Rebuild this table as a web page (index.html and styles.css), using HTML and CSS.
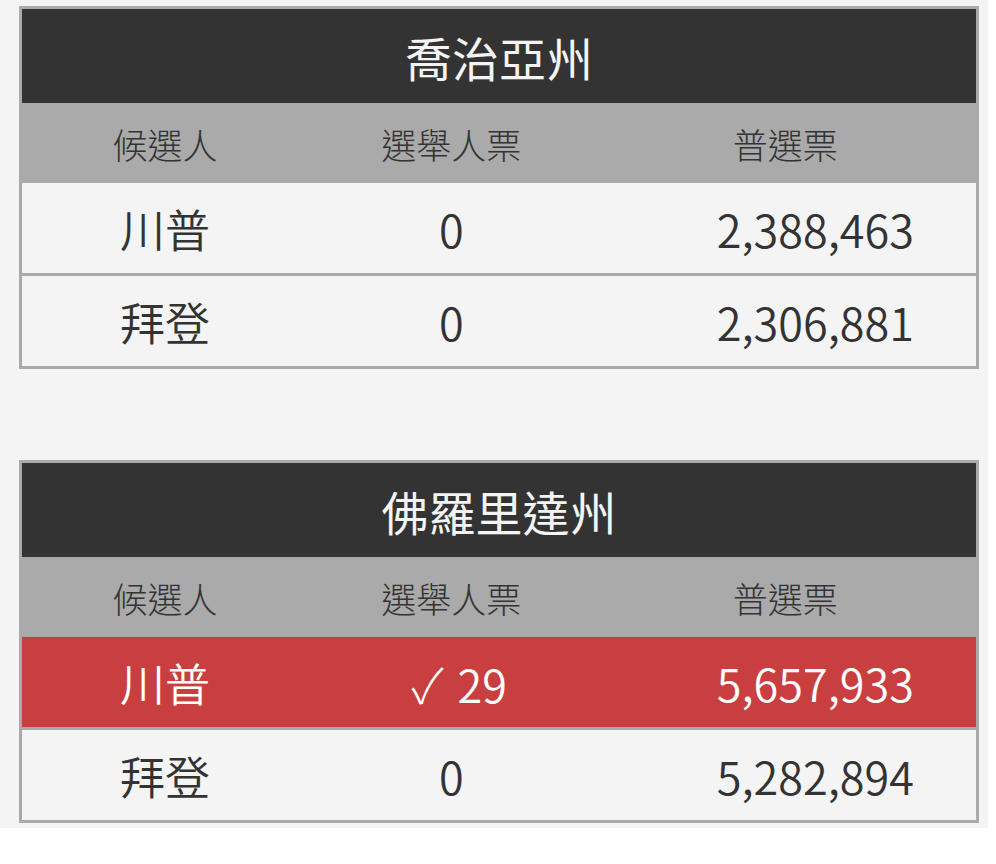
FILE: index.html
```html
<!DOCTYPE html>
<html lang="zh-Hant">
<head>
    <meta charset="UTF-8">
    <meta name="viewport" content="width=device-width, initial-scale=1.0">
    <title>州選舉結果</title>
    <link rel="stylesheet" href="styles.css">
</head>
<body>
    <div class="page">
        <div class="state">
            <div class="state-title">喬治亞州</div>
            <div class="cols">
                <div>候選人</div>
                <div>選舉人票</div>
                <div>普選票</div>
            </div>
            <div class="row">
                <div>川普</div>
                <div>0</div>
                <div class="num">2,388,463</div>
            </div>
            <div class="row">
                <div>拜登</div>
                <div>0</div>
                <div class="num">2,306,881</div>
            </div>
        </div>

        <div class="state">
            <div class="state-title">佛羅里達州</div>
            <div class="cols">
                <div>候選人</div>
                <div>選舉人票</div>
                <div>普選票</div>
            </div>
            <div class="row winner">
                <div>川普</div>
                <div class="won"><span class="check">✓</span> 29</div>
                <div class="num">5,657,933</div>
            </div>
            <div class="row">
                <div>拜登</div>
                <div>0</div>
                <div class="num">5,282,894</div>
            </div>
        </div>
    </div>
</body>
</html>
```

FILE: styles.css
```css
html {
    background-color: #fff;
}
body {
    margin: 0;
    font-family: "Noto Sans CJK TC", "Noto Sans", sans-serif;
    color: #333;
}
.page {
    width: 988px;
    height: 828px;
    box-sizing: border-box;
    padding: 6px 0 0 19px;
    background-color: #f4f4f4;
}
.state {
    width: 960px;
    box-sizing: border-box;
    border: 3px solid #aaa;
    margin-bottom: 91px;
}
.state-title {
    height: 94px;
    display: flex;
    align-items: center;
    justify-content: center;
    background-color: #333;
    color: #f4f4f4;
    font-size: 47px;
    line-height: 1;
}
.cols, .row {
    display: grid;
    grid-template-columns: 30% 30% 40%;
    align-items: center;
    text-align: center;
    line-height: 1;
}
.cols {
    height: 80px;
    background-color: #aaa;
    font-size: 35px;
    font-weight: 300;
}
.row {
    height: 90px;
    font-size: 45px;
    font-weight: 350;
}
.row + .row {
    border-top: 3px solid #aaa;
}
.row .num {
    text-align: right;
    padding-right: 62px;
}
.row.winner {
    background-color: #c93e3e;
    color: #fff;
}
.won {
    padding-left: 16px;
}
.check {
    font-size: 48px;
    font-weight: 300;
    margin-right: 4px;
}
```
